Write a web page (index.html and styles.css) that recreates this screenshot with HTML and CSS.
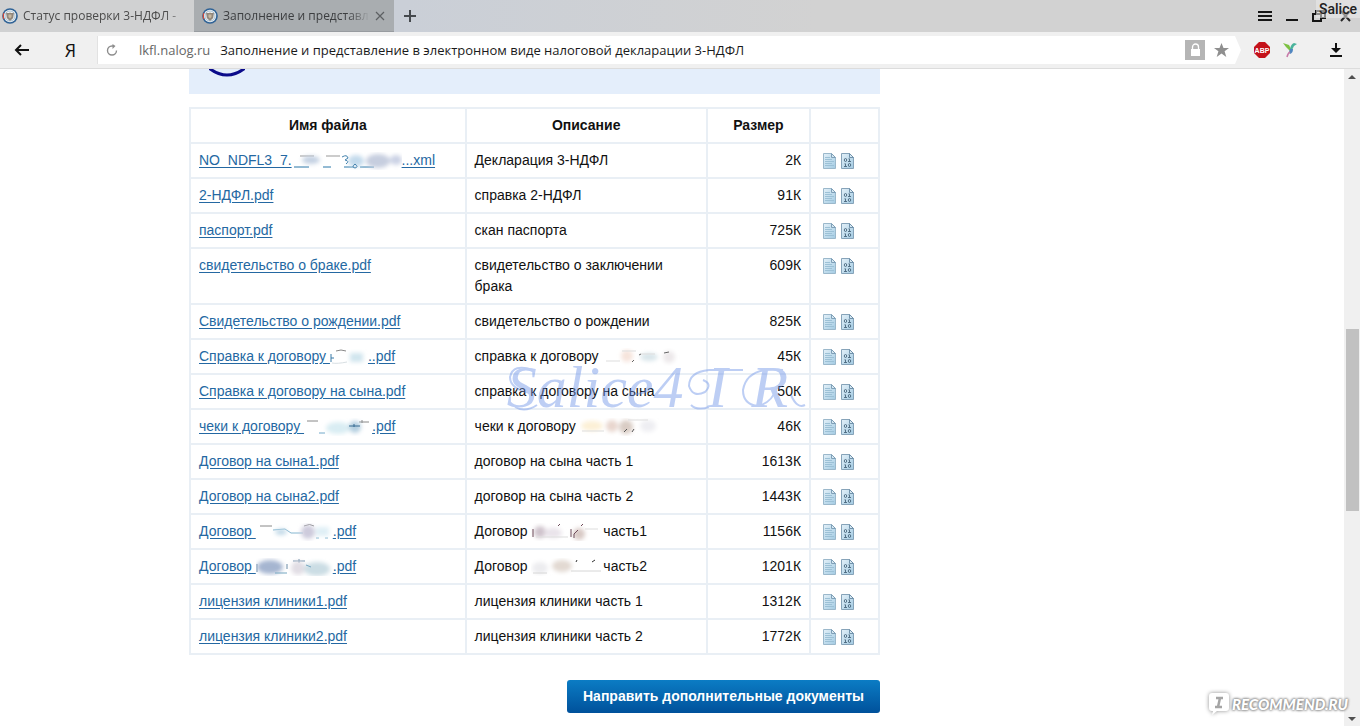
FILE: index.html
```html
<!DOCTYPE html>
<html lang="ru">
<head>
<meta charset="utf-8">
<meta name="viewport" content="width=device-width, initial-scale=1">
<title>Заполнение и представление в электронном виде налоговой декларации 3-НДФЛ</title>
<link rel="stylesheet" href="styles.css">
</head>
<body>
<svg class="defs" aria-hidden="true">
  <defs>
    <linearGradient id="sheet" x1="0" y1="0" x2="1" y2="1"><stop offset="0" stop-color="#e3f0f8"/><stop offset="1" stop-color="#a3cbe3"/></linearGradient>
    <filter id="soft" x="-40%" y="-40%" width="180%" height="180%"><feGaussianBlur stdDeviation="2"/></filter>
    <symbol id="emblem" viewBox="0 0 16 16">
      <circle cx="8" cy="8" r="7.8" fill="#2e6296"/><circle cx="8" cy="8" r="6.2" fill="#f3f3f1"/>
      <path d="M2 5A7 7 0 0 0 2 11" fill="none" stroke="#d14b3c" stroke-width="1.2"/>
      <circle cx="8" cy="8" r="5" fill="none" stroke="#8fb3d2" stroke-width=".8"/>
      <path d="M4 4.5q2 1 4 0q2 1 4 0l-.8 5.5L8 13l-3.200-3z" fill="#90877c"/><path d="M6.500 6.500h3v2.500L8 10.500 6.500 9z" fill="#c9b9a0"/>
    </symbol>
    <symbol id="doc" viewBox="0 0 13 16">
      <path d="M.5.5h8l4 4v11H.5z" fill="url(#sheet)" stroke="#9bb8cb"/><path d="M8.500.5v4h4z" fill="#d5e7f1" stroke="#7fa0b8"/>
      <path d="M2 4.500h5M2 6.500h7M2 8.500h9M2 10.500h7M2 12.500h9" stroke="#9cc1d6"/>
    </symbol>
    <symbol id="bin" viewBox="0 0 13 16">
      <path d="M.5.5h8l4 4v11H.5z" fill="url(#sheet)" stroke="#86a3b9"/><path d="M8.500.5v4h4z" fill="#d5e7f1" stroke="#6f91ab"/>
      <g fill="none" stroke="#48657c" stroke-width=".9"><ellipse cx="4.500" cy="7" rx="1.200" ry="1.500"/><path d="M7.500 5.800h1v2.700M7 8.500h3M3.500 10.800h1v2.700M3 13.500h3"/>
      <ellipse cx="8.500" cy="12" rx="1.200" ry="1.500"/></g>
    </symbol>
  </defs>
</svg>

<header class="browser">
  <div class="tabs">
    <button class="tab" type="button"><svg class="fav"><use href="#emblem"/></svg><span class="tab-name">Статус проверки 3-НДФЛ -</span></button>
    <div class="tab active"><svg class="fav"><use href="#emblem"/></svg><span class="tab-name">Заполнение и представл</span>
      <button class="tool" type="button" aria-label="Закрыть вкладку"><svg width="10" height="10" viewBox="0 0 10 10"><path d="M1 1l8 8M9 1L1 9" stroke="#5d6063" stroke-width="1.200"/></svg></button></div>
    <button class="tool add" type="button" aria-label="Новая вкладка"><svg width="12" height="12" viewBox="0 0 12 12"><path d="M6 0v12M0 6h12" stroke="#45494d" stroke-width="2"/></svg></button>
    <div class="window">
      <button class="tool" type="button" aria-label="Меню"><svg width="14" height="12" viewBox="0 0 14 12"><path d="M0 2h14M0 6h14M0 10h14" stroke="#151515" stroke-width="2"/></svg></button>
      <button class="tool" type="button" aria-label="Свернуть"><svg width="12" height="12" viewBox="0 0 12 12"><path d="M0 10h12" stroke="#151515" stroke-width="2"/></svg></button>
      <button class="tool" type="button" aria-label="Развернуть"><svg width="14" height="12" viewBox="0 0 14 12"><path d="M1 4h8v7H1zM4 4V1h9v7H9" fill="none" stroke="#151515" stroke-width="2"/></svg></button>
      <button class="tool" type="button" aria-label="Закрыть"><svg width="11" height="12" viewBox="0 0 11 12"><path d="M1 1l9 10M10 1L1 11" stroke="#252525" stroke-width="2"/></svg></button>
      <span class="owner">Salice</span>
    </div>
  </div>
  <div class="toolbar">
    <button class="tool back" type="button" aria-label="Назад"><svg width="16" height="12" viewBox="0 0 16 12"><path d="M15 6H2M7 1L2 6l5 5" fill="none" stroke="#111" stroke-width="2"/></svg></button>
    <button class="tool ya" type="button">Я</button>
    <div class="address">
      <button class="tool" type="button" aria-label="Обновить"><svg width="12" height="12" viewBox="0 0 12 12"><path d="M10.500 6.500A4.500 4.500 0 1 1 6 2h2" fill="none" stroke="#8d8d8d" stroke-width="1.400"/><path d="M6.500 0l3 2-3 3z" fill="#8d8d8d"/></svg></button>
      <span class="host">lkfl.nalog.ru</span>
      <span class="title">Заполнение и представление в электронном виде налоговой декларации 3-НДФЛ</span>
      <button class="tool lock" type="button" aria-label="Защита"><svg width="20" height="20" viewBox="0 0 20 20"><path d="M0 0h20v20H0z" fill="#b5b5b5"/><path d="M6 9h9v7H6z" fill="#fff"/><path d="M7.500 9V7a3 3 0 0 1 6 0v2" fill="none" stroke="#fff" stroke-width="1.300"/></svg></button>
      <button class="tool" type="button" aria-label="В закладки"><svg width="15" height="14" viewBox="0 0 15 14"><path d="M7.500 0l2 5H15l-4.400 3.300L12.300 14 7.500 10.500 2.700 14l1.700-5.700L0 5h5.500z" fill="#8f8f8f"/></svg></button>
    </div>
    <svg class="point" viewBox="0 0 6 28"><path d="M0 0l6 14-6 14z" fill="#fff"/></svg>
    <button class="tool abp" type="button" aria-label="Adblock Plus"><svg width="16" height="16" viewBox="0 0 16 16"><path d="M5 0h6l5 5v6l-5 5H5l-5-5V5z" fill="#c4121a"/><text class="abp-text" x="8" y="11" text-anchor="middle">ABP</text></svg></button>
    <button class="tool bird" type="button" aria-label="Расширение"><svg width="14" height="16" viewBox="0 0 14 16"><path d="M0 1l6 2 2 4-1 2-4-4z" fill="#7cc142"/><path d="M7 7q1-5 4-6l3 1-3 2-2 4z" fill="#49b39b"/><path d="M7 7l3 0q0 4-3 5l-1-2z" fill="#4e86c0"/><path d="M7 10q-2 1-3 5" fill="none" stroke="#c77aa8" stroke-width="1.500"/></svg></button>
    <button class="tool load" type="button" aria-label="Загрузки"><svg width="12" height="14" viewBox="0 0 12 14"><path d="M5 0h2v5h4L6 10 1 5h4z" fill="#111"/><path d="M0 13h12" stroke="#111" stroke-width="2"/></svg></button>
  </div>
</header>

<div class="view">
  <main class="page">
    <div class="notice"><svg width="36" height="8" viewBox="0 0 36 8"><path d="M0-1q18 14 36 0" fill="none" stroke="#0b0b8a" stroke-width="3"/></svg></div>
    <div class="files-wrap">
    <table class="files">
      <colgroup><col class="c-name"><col class="c-note"><col class="c-size"><col class="c-act"></colgroup>
      <thead><tr><th scope="col">Имя файла</th><th scope="col">Описание</th><th scope="col">Размер</th><td></td></tr></thead>
      <tbody>
      <tr><td><a href="#">NO_NDFL3_7.<svg class="smudge" width="110" height="18" viewBox="0 0 110 18"><path d="M2 15h15M31 15h8M52 15h10M68 15h14" stroke="#2877a8"/><path d="M8 4h14M34 4h14" stroke="#999"/><g filter="url(#soft)"><ellipse cx="19" cy="8" rx="9" ry="4" fill="#c3d0e2"/><ellipse cx="64" cy="9" rx="8" ry="6" fill="#c3daec"/><ellipse cx="86" cy="9" rx="12" ry="7" fill="#c6cedf"/><ellipse cx="104" cy="8" rx="6" ry="5" fill="#cbd2e5"/></g><path d="M50 5q5-3 6 1l-3 2q5 1 1 4M63 12q-4 3 0 4q4-1 0-4" fill="none" stroke="#4382ad"/></svg>...xml</a></td><td>Декларация 3-НДФЛ</td><td>2К</td><td><svg class="ico"><use href="#doc"/></svg><svg class="ico"><use href="#bin"/></svg></td></tr>
      <tr><td><a href="#">2-НДФЛ.pdf</a></td><td>справка 2-НДФЛ</td><td>91К</td><td><svg class="ico"><use href="#doc"/></svg><svg class="ico"><use href="#bin"/></svg></td></tr>
      <tr><td><a href="#">паспорт.pdf</a></td><td>скан паспорта</td><td>725К</td><td><svg class="ico"><use href="#doc"/></svg><svg class="ico"><use href="#bin"/></svg></td></tr>
      <tr><td><a href="#">свидетельство о браке.pdf</a></td><td>свидетельство о заключении брака</td><td>609К</td><td><svg class="ico"><use href="#doc"/></svg><svg class="ico"><use href="#bin"/></svg></td></tr>
      <tr><td><a href="#">Свидетельство о рождении.pdf</a></td><td>свидетельство о рождении</td><td>825К</td><td><svg class="ico"><use href="#doc"/></svg><svg class="ico"><use href="#bin"/></svg></td></tr>
      <tr><td><a href="#">Справка к договору <svg class="smudge" width="38" height="18" viewBox="0 0 38 18"><path d="M1 6v8M1 10h3" stroke="#3779a6"/><path d="M6 3q5-2 10 0" fill="none" stroke="#888"/><path d="M2 15q5 1 15-1" fill="none" stroke="#d8dfe3"/><g filter="url(#soft)"><path d="M20 5h13v9H20z" fill="#d0e5ee"/></g></svg>..pdf</a></td><td>справка к договору <svg class="smudge" width="80" height="18" viewBox="0 0 80 18"><g filter="url(#soft)"><circle cx="25" cy="8" r="6" fill="#f6e4dc"/><ellipse cx="47" cy="9" rx="9" ry="4" fill="#d8e5ea"/><circle cx="67" cy="9" r="6" fill="#ece8ea"/></g><path d="M4 13h14M20 3h14M39 6h14" stroke="#ddd"/><path d="M30 14l2-2M37 7l2-1M62 5l5-1" stroke="#666"/></svg></td><td>45К</td><td><svg class="ico"><use href="#doc"/></svg><svg class="ico"><use href="#bin"/></svg></td></tr>
      <tr><td><a href="#">Справка к договору на сына.pdf</a></td><td>справка к договору на сына</td><td>50К</td><td><svg class="ico"><use href="#doc"/></svg><svg class="ico"><use href="#bin"/></svg></td></tr>
      <tr><td><a href="#">чеки к договору <svg class="smudge" width="68" height="18" viewBox="0 0 68 18"><path d="M3 3h11M55 4h10M58 2v3" stroke="#888"/><path d="M15 15h6" stroke="#71a8c9"/><g filter="url(#soft)"><ellipse cx="34" cy="10" rx="12" ry="6" fill="#d9edf3"/><ellipse cx="51" cy="9" rx="6" ry="6" fill="#b4cfe0"/></g><path d="M45 8h11M50 6v3" stroke="#376b91"/></svg>.pdf</a></td><td>чеки к договору <svg class="smudge" width="80" height="18" viewBox="0 0 80 18"><g filter="url(#soft)"><ellipse cx="12" cy="8" rx="11" ry="5" fill="#fcf0d6"/><circle cx="32" cy="8" r="6" fill="#e8d6ce"/><circle cx="46" cy="9" r="7" fill="#d9ccc4"/><ellipse cx="68" cy="8" rx="8" ry="6" fill="#eeeef2"/></g><path d="M2 13h22M48 2h20" stroke="#ddd"/><path d="M44 14l3-3M52 14l2-3" stroke="#555"/></svg></td><td>46К</td><td><svg class="ico"><use href="#doc"/></svg><svg class="ico"><use href="#bin"/></svg></td></tr>
      <tr><td><a href="#">Договор на сына1.pdf</a></td><td>договор на сына часть 1</td><td>1613К</td><td><svg class="ico"><use href="#doc"/></svg><svg class="ico"><use href="#bin"/></svg></td></tr>
      <tr><td><a href="#">Договор на сына2.pdf</a></td><td>договор на сына часть 2</td><td>1443К</td><td><svg class="ico"><use href="#doc"/></svg><svg class="ico"><use href="#bin"/></svg></td></tr>
      <tr><td><a href="#">Договор <svg class="smudge" width="77" height="18" viewBox="0 0 77 18"><path d="M4 3h12M48 3q6-3 10 0" fill="none" stroke="#888"/><path d="M17 7l12-1 6 4h12M60 15h3M69 15h3" fill="none" stroke="#85b6d0"/><g filter="url(#soft)"><ellipse cx="25" cy="9" rx="6" ry="3" fill="#c0d8e7"/><circle cx="52" cy="9" r="7" fill="#cdcbdc"/><path d="M60 4h13v9H60z" fill="#dfeff6"/></g></svg>.pdf</a></td><td>Договор <svg class="smudge" width="72" height="18" viewBox="0 0 72 18"><g filter="url(#soft)"><circle cx="9" cy="9" r="6" fill="#cfc3cc"/><ellipse cx="22" cy="10" rx="9" ry="5" fill="#e9e3ea"/><circle cx="48" cy="11" r="6" fill="#d8c9c5"/></g><path d="M2 6v8M40 6v8M43 15v-4l4-4M27 3l2-2M50 3l2-2" fill="none" stroke="#6c4a58"/><path d="M5 14h32M54 6h13" stroke="#ddd"/></svg>часть1</td><td>1156К</td><td><svg class="ico"><use href="#doc"/></svg><svg class="ico"><use href="#bin"/></svg></td></tr>
      <tr><td><a href="#">Договор <svg class="smudge" width="77" height="18" viewBox="0 0 77 18"><path d="M1 6v8M31 6v5M37 3h12M43 1v4" stroke="#6688a5"/><g filter="url(#soft)"><ellipse cx="14" cy="9" rx="13" ry="7" fill="#a5b5d0"/><circle cx="42" cy="10" r="7" fill="#e1dde4"/><ellipse cx="61" cy="11" rx="13" ry="7" fill="#cbdde4"/></g><path d="M19 15h12M50 7l5 2" stroke="#75a6c0"/></svg>.pdf</a></td><td>Договор <svg class="smudge" width="72" height="18" viewBox="0 0 72 18"><g filter="url(#soft)"><ellipse cx="9" cy="10" rx="8" ry="6" fill="#ececef"/><ellipse cx="31" cy="8" rx="10" ry="6" fill="#e2d9d2"/></g><path d="M2 15h14M40 13h30" stroke="#d6d6d6"/><path d="M45 4l1-2M61 4l3-2" stroke="#333"/></svg>часть2</td><td>1201К</td><td><svg class="ico"><use href="#doc"/></svg><svg class="ico"><use href="#bin"/></svg></td></tr>
      <tr><td><a href="#">лицензия клиники1.pdf</a></td><td>лицензия клиники часть 1</td><td>1312К</td><td><svg class="ico"><use href="#doc"/></svg><svg class="ico"><use href="#bin"/></svg></td></tr>
      <tr><td><a href="#">лицензия клиники2.pdf</a></td><td>лицензия клиники часть 2</td><td>1772К</td><td><svg class="ico"><use href="#doc"/></svg><svg class="ico"><use href="#bin"/></svg></td></tr>
      </tbody>
    </table>
    <div class="sign">
      <span>Salice4</span><span>I</span><span>R</span>
      <svg class="swash" viewBox="0 0 300 48"><g fill="none" stroke="currentColor" stroke-width="2"><path d="M26 5Q6-2 3 12q0 12 20 16M30 40Q18 48 8 42"/><path d="M236 5h-34q-20 2-20 16 4 12 16 6 8-8-2-12M202 42q-12 4-18-2"/><path d="M276 5q-36-4-40 20 0 14 14 16 14-2 20-18M284 30q6 14 14 10"/></g></svg>
    </div>
    </div>
    <div class="actions"><button class="send" type="button">Направить дополнительные документы</button></div>
  </main>
  <div class="scroll" aria-hidden="true">
    <svg width="8" height="4" viewBox="0 0 8 4"><path d="M0 4l4-4 4 4z" fill="#505050"/></svg>
    <div class="track"><div class="thumb"></div></div>
    <svg width="8" height="4" viewBox="0 0 8 4"><path d="M0 0h8L4 4z" fill="#505050"/></svg>
  </div>
  <div class="brand"><svg width="22" height="24" viewBox="0 0 22 24"><path d="M4 1h14q3 0 3 3v12q0 3-3 3H9l-5 4 1-4H4q-3 0-3-3V4q0-3 3-3z" fill="#fff"/><path d="M8 6h7M7 15h7M12 6l-2 9" stroke="#a5a5a5" stroke-width="2.500"/></svg><span>RECOMMEND.RU</span></div>
</div>
</body>
</html>
```
FILE: styles.css
```css
* { box-sizing: border-box; }
body {
  margin: 0;
  min-height: 100vh;
  display: flex;
  flex-direction: column;
  background: #fff;
  color: #111;
  font: 14px/21px "Liberation Sans", Arial, sans-serif;
}
.defs { position: absolute; width: 0; height: 0; }
button { font: inherit; color: inherit; }
.tool { display: flex; align-items: center; justify-content: center; padding: 0; border: 0; background: none; flex: none; }

/* browser frame */
.browser { font: 13px/20px "Open Sans", "Noto Sans", sans-serif; }
.tabs { display: flex; height: 32px; background: linear-gradient(90deg, #cacfd7 30%, #d2d2d2 60%); }
.tab {
  display: flex;
  align-items: center;
  gap: 5px;
  width: 194px;
  padding: 0 4px 0 2px;
  border: 0;
  background: #d0d1d2;
  color: #4b4b4b;
  font-size: 12px;
  text-align: left;
}
.tab.active { width: 200px; padding: 0 9px 0 8px; background: #a9adb0; border-bottom: 1px solid #989ca0; color: #3c3e40; }
.tab-name {
  flex: 1;
  overflow: hidden;
  white-space: nowrap;
  -webkit-mask-image: linear-gradient(90deg, #000 85%, transparent);
  mask-image: linear-gradient(90deg, #000 85%, transparent);
}
.fav { width: 16px; height: 16px; flex: none; }
.add { width: 32px; }
.window { position: relative; display: flex; align-items: center; gap: 14px; margin-left: auto; padding-right: 9px; }
.owner {
  position: absolute;
  top: 0;
  right: 0;
  padding: 0 3px;
  background: rgba(235, 235, 235, .55);
  color: #222;
  font: 500 14px/18px Roboto, sans-serif;
}
.toolbar { display: flex; align-items: center; height: 37px; background: #f0f0f0; border-bottom: 1px solid #dcdcdc; }
.back { width: 44px; }
.ya { width: 53px; font-size: 18px; }
.address { flex: 1; display: flex; align-items: center; min-width: 0; height: 28px; padding: 0 6px 0 8px; background: #fff; border-left: 1px solid #e2e2e2; }
.host { margin-left: 21px; color: #666; }
.title { flex: 1; margin-left: 10px; overflow: hidden; white-space: nowrap; color: #1a1a1a; }
.lock { margin-right: 9px; }
.point { width: 6px; height: 28px; }
.abp { margin-left: 13px; }
.abp-text { font: bold 7px "Liberation Sans", sans-serif; fill: #fff; }
.bird { margin-left: 13px; }
.load { margin: 0 18px 0 33px; }

/* page */
.view { position: relative; flex: 1; display: flex; }
.page { flex: 1; display: grid; grid-template-columns: 189fr 691fr 464fr; align-content: start; padding-bottom: 12px; }
.page > * { grid-column: 2; }
.notice { height: 25px; margin-bottom: 13px; padding-left: 20px; background: #e4eefb; }
.notice svg { display: block; }
.files-wrap { position: relative; }
.files { width: 100%; table-layout: fixed; border-collapse: collapse; }
.c-name { width: 40%; }
.c-note { width: 35%; }
.c-size { width: 15%; }
.c-act { width: 10%; }
.files th, .files td { padding: 6px 8px; border: 2px solid #e9eff5; vertical-align: top; }
.files th { font-weight: bold; text-align: center; }
.files td:nth-child(3) { text-align: right; }
.files td:nth-child(4) { padding-left: 12px; }
.files a { color: #2468a2; text-underline-offset: 2px; }
.smudge { vertical-align: -4px; height: 18px; margin-bottom: -1px; }
.ico { width: 13px; height: 16px; margin-right: 5px; vertical-align: -4px; }
.sign {
  position: absolute;
  top: 250px;
  left: 46%;
  display: flex;
  gap: 24px;
  color: #6e94e8;
  opacity: .45;
  font: italic 60px/60px "Liberation Serif", serif;
  pointer-events: none;
}
.swash { position: absolute; top: 8px; left: 0; width: 300px; height: 48px; }
.actions { display: flex; justify-content: flex-end; padding-top: 25px; }
.send {
  height: 33px;
  padding: 0 16px;
  border: 0;
  border-radius: 3px;
  background: linear-gradient(#0b7cc4, #00519b);
  color: #fff;
  font-weight: bold;
}

/* scroll bar */
.scroll { width: 16px; display: flex; flex-direction: column; align-items: center; padding: 6px 0 5px; background: #f0f0f0; }
.track { flex: 1; display: grid; grid-template-rows: 249fr 182fr 205fr; width: 13px; }
.thumb { grid-row: 2; background: #c1c1c1; }
.brand {
  position: absolute;
  right: 12px;
  bottom: 10px;
  display: flex;
  align-items: center;
  gap: 2px;
  color: #fff;
  font: italic 900 15px/20px Lato, sans-serif;
  text-shadow: 0 0 3px #8a8a8a, 0 0 3px #8a8a8a, 0 0 2px #8a8a8a;
}
.brand svg { filter: drop-shadow(0 0 2px #909090); }
```
